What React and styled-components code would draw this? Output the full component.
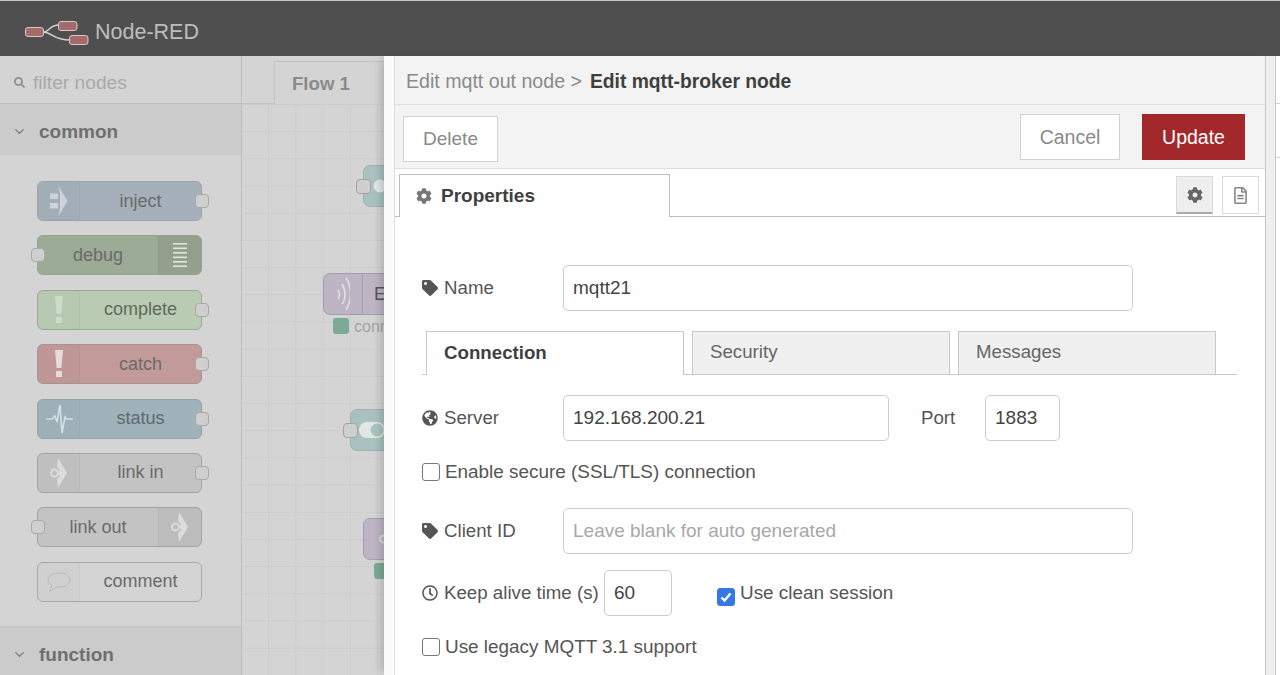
import React from "react";
import styled, { createGlobalStyle } from "styled-components";
import { FaCog, FaTag, FaGlobeAmericas, FaRegClock, FaRegFileAlt, FaSearch } from "react-icons/fa";
import { FiChevronDown } from "react-icons/fi";

const GlobalStyle = createGlobalStyle`
  html, body {
    margin: 0;
    height: 100%;
    overflow: hidden;
    font-family: "Liberation Sans", Arial, sans-serif;
    color: #555;
  }
  * { box-sizing: border-box; }
`;

const Page = styled.div`
  position: relative;
  width: 1280px;
  height: 675px;
  overflow: hidden;
  background: #d4d4d4;
`;

const Header = styled.header`
  height: 56px;
  background: #4f4f4f;
  border-top: 1px solid #c9c9c9;
  display: flex;
  align-items: center;
  padding: 8px 0 0 24px;
  gap: 6px;
  color: #bdbdbd;
  font-size: 21.5px;
`;

const Main = styled.div`
  display: flex;
  height: 619px;
`;

const Palette = styled.aside`
  width: 242px;
  flex: none;
  border-right: 1px solid #bdbdbd;
  background: #d4d4d4;
`;

const Filter = styled.div`
  height: 48px;
  display: flex;
  align-items: center;
  padding: 6px 0 0 14px;
  gap: 8px;
  font-size: 19.2px;
  color: #a9a9a9;
  border-bottom: 1px solid #bcbcbc;
  svg { color: #8f8f8f; }
`;

const Category = styled.div`
  height: 51px;
  display: flex;
  align-items: center;
  padding: 4px 0 0 12px;
  gap: 12px;
  font-size: 19px;
  font-weight: 700;
  color: #6f6f6f;
  background: #cbcbcb;
  svg { color: #777; }
`;

const NodeList = styled.div`
  height: 472px;
  padding: 26px 0 0 37px;
  display: flex;
  flex-direction: column;
  gap: 14.4px;
  border-bottom: 1px solid #c3c3c3;
`;

const PaletteNode = styled.div`
  position: relative;
  width: 165px;
  height: 40px;
  flex: none;
  display: flex;
  flex-direction: ${(p) => (p.$flip ? "row-reverse" : "row")};
  border: 1px solid ${(p) => p.$line};
  border-radius: 6px;
  background: ${(p) => p.$bg};
  font-size: 18px;
  color: ${(p) => p.$text || "#6a6a6a"};
`;

const IconCell = styled.div`
  width: ${(p) => (p.$flip ? "43px" : "42px")};
  flex: none;
  display: flex;
  align-items: center;
  justify-content: center;
  background: rgba(0, 0, 0, ${(p) => p.$shade || 0.015});
  border-radius: ${(p) => (p.$flip ? "0 5px 5px 0" : "5px 0 0 5px")};
  ${(p) => (p.$flip ? "border-left" : "border-right")}: 1px solid rgba(0, 0, 0, 0.03);
`;

const NodeLabel = styled.div`
  flex: 1;
  display: flex;
  align-items: center;
  justify-content: center;
`;

const Port = styled.span`
  position: absolute;
  top: 12px;
  ${(p) => (p.$side === "left" ? "left: -7px" : "right: -8px")};
  width: 14px;
  height: 14px;
  border-radius: 4px;
  background: #cfcfcf;
  border: 1px solid #a8a8a8;
`;

const Workspace = styled.section`
  flex: 1;
  min-width: 0;
`;

const TabBar = styled.div`
  height: 48px;
  padding: 5px 0 0 32px;
  border-bottom: 1px solid #c3c3c3;
`;

const FlowTab = styled.div`
  width: 120px;
  height: 43px;
  border: 1px solid #c2c2c2;
  border-bottom: 0;
  background: #d4d4d4;
  padding: 11px 0 0 17px;
  font-size: 18.6px;
  font-weight: 700;
  color: #8a8a8a;
`;

const Canvas = styled.div`
  position: relative;
  height: 571px;
  overflow: hidden;
  background-color: #d4d4d4;
  background-image:
    linear-gradient(#cccccc 1px, transparent 1px),
    linear-gradient(90deg, #cccccc 1px, transparent 1px);
  background-size: 27.2px 27.2px;
  background-position: -1px 0;
`;

const FlowNode = styled.div`
  position: absolute;
  left: ${(p) => p.$x}px;
  top: ${(p) => p.$y}px;
  width: 100px;
  height: 42px;
  border: 1px solid ${(p) => p.$line};
  border-radius: 7px;
  background: ${(p) => p.$bg};
  display: flex;
  align-items: center;
`;

const FlowIcon = styled.div`
  width: 39px;
  height: 100%;
  flex: none;
  display: flex;
  align-items: center;
  justify-content: ${(p) => (p.$start ? "flex-start" : "center")};
  padding-left: ${(p) => p.$pad || 0}px;
  ${(p) => p.$divided && "border-right: 1px solid #a49dab;"}
`;

const FlowNodeText = styled.span`
  padding-left: 11px;
  font-size: 18px;
  color: #555;
`;

const CanvasPort = styled.span`
  position: absolute;
  left: ${(p) => p.$x}px;
  top: ${(p) => p.$y}px;
  width: 15px;
  height: 15px;
  border-radius: 4px;
  background: #cfcfcf;
  border: 1px solid #a3a3a3;
`;

const StatusDot = styled.span`
  position: absolute;
  left: ${(p) => p.$x}px;
  top: ${(p) => p.$y}px;
  width: 16px;
  height: 16px;
  border-radius: 3px;
  background: #7bab96;
`;

const StatusText = styled.span`
  position: absolute;
  left: ${(p) => p.$x}px;
  top: ${(p) => p.$y}px;
  font-size: 16px;
  color: #a3a3a3;
`;

const Tray = styled.div`
  position: absolute;
  left: 384px;
  top: 56px;
  width: 882px;
  height: 619px;
  background: #fbfbfb;
  padding-left: 10px;
  border-right: 1px solid #c4c4c4;
  box-shadow: -6px 0 8px -3px rgba(0, 0, 0, 0.18);
`;

const TrayInner = styled.div`
  height: 100%;
  border-left: 1px solid #dcdcdc;
  background: #fff;
`;

const Crumbs = styled.div`
  height: 49px;
  background: #f3f3f3;
  border-bottom: 1px solid #dedede;
  display: flex;
  align-items: center;
  padding: 3px 0 0 11px;
  font-size: 19.6px;
  color: #8a8a8a;
  gap: 8px;
  b { color: #3f3f3f; font-size: 19.3px; }
`;

const Toolbar = styled.div`
  height: 64px;
  background: #f3f3f3;
  border-bottom: 1px solid #dedede;
  display: flex;
  align-items: flex-start;
  padding: 9px 20px 0 8px;
`;

const Button = styled.button`
  font: inherit;
  font-size: ${(p) => p.$fs || 19.5}px;
  width: ${(p) => p.$w}px;
  height: 46px;
  margin-top: ${(p) => p.$mt || 0}px;
  margin-left: ${(p) => (p.$push ? "auto" : p.$ml ? p.$ml + "px" : 0)};
  background: ${(p) => (p.$primary ? "#a3282b" : "#fff")};
  color: ${(p) => (p.$primary ? "#fff" : "#8a8a8a")};
  border: 1px solid ${(p) => (p.$primary ? "#a3282b" : "#d2d2d2")};
  padding: 0;
`;

const TabRow = styled.div`
  height: 48px;
  display: flex;
  align-items: flex-end;
  padding: 0 6px 0 4px;
  border-bottom: 1px solid #bdbdbd;
`;

const PropTab = styled.div`
  width: 271px;
  height: 43px;
  margin-bottom: -1px;
  background: #fff;
  border: 1px solid #bdbdbd;
  border-bottom: 0;
  display: flex;
  align-items: center;
  gap: 9px;
  padding: 0 0 0 16px;
  font-size: 19px;
  font-weight: 700;
  color: #3f3f3f;
  svg { color: #777; }
`;

const SideButton = styled.div`
  width: 37px;
  height: 38px;
  align-self: flex-start;
  margin: 7px 0 0 ${(p) => (p.$first ? "auto" : "9px")};
  display: flex;
  align-items: center;
  justify-content: center;
  background: ${(p) => (p.$active ? "#eeeeee" : "#fff")};
  border: 1px solid #dadada;
  border-bottom: ${(p) => (p.$active ? "2px solid #aaa" : "1px solid #dadada")};
  svg { color: ${(p) => (p.$active ? "#666" : "#888")}; }
`;

const Form = styled.div`
  padding: 48px 0 0 27px;
  font-size: 18.7px;
  color: #555;
`;

const Row = styled.div`
  display: flex;
  align-items: center;
  height: 46px;
  margin-top: ${(p) => p.$mt || 0}px;
`;

const Label = styled.label`
  width: ${(p) => p.$w || 141}px;
  margin-left: ${(p) => p.$ml || 0}px;
  flex: none;
  display: flex;
  align-items: center;
  gap: 6px;
  padding-bottom: 1px;
  white-space: nowrap;
  svg { color: #555; flex: none; }
`;

const TextInput = styled.input`
  font: inherit;
  font-size: 19px;
  color: #444;
  width: ${(p) => p.$w}px;
  height: 46px;
  flex: none;
  border: 1px solid #ccc;
  border-radius: 5px;
  padding: 0 9px;
  outline: 0;
  background: #fff;
  &::placeholder { color: #a8a8a8; opacity: 1; }
`;

const SubTabs = styled.div`
  display: flex;
  gap: 8px;
  width: 815px;
  height: 44px;
  margin-top: 20px;
  border-bottom: 1px solid #c8c8c8;
  padding-left: 4px;
`;

const SubTab = styled.div`
  width: 258px;
  height: 44px;
  padding: ${(p) => (p.$active ? "10px 0 0 17px" : "9px 0 0 17px")};
  background: ${(p) => (p.$active ? "#fff" : "#f0f0f0")};
  border: 1px solid #c8c8c8;
  border-bottom: ${(p) => (p.$active ? "0" : "1px solid #c8c8c8")};
  font-weight: ${(p) => (p.$active ? 700 : 400)};
  color: ${(p) => (p.$active ? "#3f3f3f" : "#666")};
`;

const CheckRow = styled.div`
  display: flex;
  align-items: center;
  gap: 5px;
  height: 18px;
  margin-top: ${(p) => p.$mt}px;
`;

const Check = styled.span`
  width: 18px;
  height: 18px;
  flex: none;
  border-radius: 3px;
  display: flex;
  align-items: center;
  justify-content: center;
  border: 1px solid ${(p) => (p.$on ? "#3478e5" : "#777")};
  background: ${(p) => (p.$on ? "#3478e5" : "#fff")};
`;

const CheckText = styled.span`
  font-size: 18.9px;
  white-space: nowrap;
`;

const CleanSession = styled.div`
  display: flex;
  align-items: center;
  gap: 5px;
  margin-left: 45px;
`;

const CleanCheck = styled(Check)`
  position: relative;
  top: 4px;
`;

const SideEdge = styled.div`
  position: absolute;
  left: 1266px;
  top: 56px;
  width: 14px;
  height: 619px;
  padding-left: 9px;
  background: #efefef;
`;

const SideColumn = styled.div`
  height: 100%;
  background: #fff;
  border-left: 1px solid #c9c9c9;
`;

const SideCell = styled.div`
  height: ${(p) => p.$h}px;
  border-bottom: 1px solid #d2d2d2;
`;

const Logo = () => (
  <svg width="65" height="26" viewBox="0 0 65 26" fill="none">
    <path d="M19 12 C26 12 25 5 35 5 M19 12 C28 12 29 20 46 20" stroke="#d3cfcf" strokeWidth="1.6" />
    <rect x="1.500" y="7.500" width="18" height="9" rx="2.500" fill="#a56a6c" stroke="#d9c9c9" />
    <rect x="34.500" y="1.500" width="18.500" height="9" rx="2.500" fill="#a56a6c" stroke="#d9c9c9" />
    <rect x="45.500" y="15.500" width="18.500" height="9" rx="2.500" fill="#a56a6c" stroke="#d9c9c9" />
  </svg>
);

const Inject = () => (
  <svg width="18" height="30" viewBox="0 0 18 30" fill="#cdd3d9">
    <path d="M0 7.500h8v5.500H0zM0 17h8v5.500H0zM8.500 0l9 15-9 15 1.500-8V8z" />
  </svg>
);

const Lines = () => (
  <svg width="14" height="24" viewBox="0 0 14 24" fill="#dfe7db">
    <rect y="0" width="14" height="1.6" />
    <rect y="4.500" width="14" height="1.6" />
    <rect y="9" width="14" height="1.6" />
    <rect y="13.500" width="14" height="1.6" />
    <rect y="18" width="14" height="1.6" />
    <rect y="22.400" width="14" height="1.6" />
  </svg>
);

const Bang = ({ color }) => (
  <svg width="10" height="28" viewBox="0 0 10 28" fill={color}>
    <path d="M1 0h8l-1.600 18H2.600zM2 21h6v6H2z" />
  </svg>
);

const Pulse = () => (
  <svg width="28" height="32" viewBox="0 0 28 32" fill="none" stroke="#d5e0e4" strokeWidth="1.6">
    <path d="M1 16h6l3-3 2 6 3-17 2 28 3-16 2 2h6" />
  </svg>
);

const LinkIcon = () => (
  <svg width="18" height="30" viewBox="0 0 18 30" fill="#dcdcdc">
    <path d="M8 0l9 15-9 15-1-9 3-3-2-3 2-3-3-3z" />
    <circle cx="4.500" cy="15" r="3.500" fill="none" stroke="#dcdcdc" strokeWidth="2" />
  </svg>
);

const Bubble = () => (
  <svg width="24" height="20" viewBox="0 0 24 20" fill="none" stroke="#b9b9b9" strokeWidth="1">
    <path d="M12 1c6 0 11 3 11 7s-5 7-11 7c-1 0-2 0-3-.2C7.500 17 5 18.500 2 19c1.500-1.500 2.500-3 2.500-5.500C2.500 12 1 10 1 8c0-4 5-7 11-7z" />
  </svg>
);

const Wifi = () => (
  <svg width="14" height="36" viewBox="0 0 14 36" fill="none" stroke="#e2dde6" strokeWidth="1.6">
    <path d="M2 14c2 3 2 6 0 9M6 8c4 6 4 15 0 20M10 2c6 9 6 23 0 32" />
  </svg>
);

const Dot = () => (
  <svg width="14" height="14" viewBox="0 0 14 14">
    <circle cx="7" cy="7" r="6.500" fill="#dfe8e6" />
  </svg>
);

const Toggle = () => (
  <svg width="26" height="16" viewBox="0 0 26 16">
    <rect width="26" height="16" rx="8" fill="#dfe8e6" />
    <circle cx="18" cy="8" r="6.500" fill="#a9c4be" />
  </svg>
);

const Tick = () => (
  <svg width="14" height="14" viewBox="0 0 14 14" fill="none" stroke="#fff" strokeWidth="2.400">
    <path d="M2.500 7.500l3 3 6-7" />
  </svg>
);

const nodes = [
  { name: "inject", bg: "#a6b0bb", line: "#9aa3ad", icon: <Inject />, right: true },
  { name: "debug", bg: "#9cab96", line: "#93a18d", icon: <Lines />, flip: true, shade: 0.06 },
  { name: "complete", bg: "#b9ccb3", line: "#9aaa96", icon: <Bang color="#cddcc8" />, right: true, text: "#5e6a5a" },
  { name: "catch", bg: "#c29a99", line: "#a99392", icon: <Bang color="#e6dada" />, right: true },
  { name: "status", bg: "#a0b2ba", line: "#93a3aa", icon: <Pulse />, right: true, text: "#5f6a70" },
  { name: "link in", bg: "#c3c3c3", line: "#a3a3a3", icon: <LinkIcon />, right: true },
  { name: "link out", bg: "#c3c3c3", line: "#a3a3a3", icon: <LinkIcon />, flip: true, shade: 0.03 },
  { name: "comment", bg: "#d4d4d4", line: "#a8a8a8", icon: <Bubble /> },
];

export default function App() {
  return (
    <Page>
      <GlobalStyle />
      <Header>
        <Logo />
        <span>Node-RED</span>
      </Header>
      <Main>
        <Palette>
          <Filter>
            <FaSearch size={11} />
            <span>filter nodes</span>
          </Filter>
          <Category>
            <FiChevronDown size={15} />
            common
          </Category>
          <NodeList>
            {nodes.map((n) => (
              <PaletteNode key={n.name} $bg={n.bg} $line={n.line} $flip={n.flip} $text={n.text}>
                <IconCell $flip={n.flip} $shade={n.shade}>{n.icon}</IconCell>
                <NodeLabel>{n.name}</NodeLabel>
                {n.right && <Port $side="right" />}
                {n.flip && <Port $side="left" />}
              </PaletteNode>
            ))}
          </NodeList>
          <Category>
            <FiChevronDown size={15} />
            function
          </Category>
        </Palette>
        <Workspace>
          <TabBar>
            <FlowTab>Flow 1</FlowTab>
          </TabBar>
          <Canvas>
            <FlowNode $x={121} $y={61} $bg="#a9c2c0" $line="#9db3b1">
              <FlowIcon $start $pad={9}>
                <Dot />
              </FlowIcon>
            </FlowNode>
            <CanvasPort $x={114} $y={75} />
            <FlowNode $x={81} $y={169} $bg="#bdb5c4" $line="#a49dab">
              <FlowIcon $divided>
                <Wifi />
              </FlowIcon>
              <FlowNodeText>E</FlowNodeText>
            </FlowNode>
            <StatusDot $x={91} $y={214} />
            <StatusText $x={112} $y={214}>connected</StatusText>
            <FlowNode $x={108} $y={305} $bg="#a9c2c0" $line="#9db3b1">
              <FlowIcon $start $pad={8}>
                <Toggle />
              </FlowIcon>
            </FlowNode>
            <CanvasPort $x={101} $y={319} />
            <FlowNode $x={121} $y={414} $bg="#bdb5c4" $line="#a49dab">
              <FlowIcon $start $pad={15}>
                <LinkIcon />
              </FlowIcon>
            </FlowNode>
            <StatusDot $x={132} $y={459} />
          </Canvas>
        </Workspace>
      </Main>
      <Tray>
        <TrayInner>
          <Crumbs>
            <span>Edit mqtt out node &gt;</span>
            <b>Edit mqtt-broker node</b>
          </Crumbs>
          <Toolbar>
            <Button $w={95} $mt={2} $fs={19}>Delete</Button>
            <Button $w={100} $push>Cancel</Button>
            <Button $w={103} $ml={22} $primary>Update</Button>
          </Toolbar>
          <TabRow>
            <PropTab>
              <FaCog size={16} />
              Properties
            </PropTab>
            <SideButton $first $active>
              <FaCog size={16} />
            </SideButton>
            <SideButton>
              <FaRegFileAlt size={17} />
            </SideButton>
          </TabRow>
          <Form>
            <Row>
              <Label>
                <FaTag size={16} />
                Name
              </Label>
              <TextInput $w={570} defaultValue="mqtt21" />
            </Row>
            <SubTabs>
              <SubTab $active>Connection</SubTab>
              <SubTab>Security</SubTab>
              <SubTab>Messages</SubTab>
            </SubTabs>
            <Row $mt={20}>
              <Label>
                <FaGlobeAmericas size={16} />
                Server
              </Label>
              <TextInput $w={326} defaultValue="192.168.200.21" />
              <Label $w={64} $ml={32}>Port</Label>
              <TextInput $w={75} defaultValue="1883" />
            </Row>
            <CheckRow $mt={22}>
              <Check />
              <CheckText>Enable secure (SSL/TLS) connection</CheckText>
            </CheckRow>
            <Row $mt={27}>
              <Label>
                <FaTag size={16} />
                Client ID
              </Label>
              <TextInput $w={570} placeholder="Leave blank for auto generated" />
            </Row>
            <Row $mt={16}>
              <Label $w={182}>
                <FaRegClock size={16} />
                Keep alive time (s)
              </Label>
              <TextInput $w={68} defaultValue="60" />
              <CleanSession>
                <CleanCheck $on>
                  <Tick />
                </CleanCheck>
                <CheckText>Use clean session</CheckText>
              </CleanSession>
            </Row>
            <CheckRow $mt={22}>
              <Check />
              <CheckText>Use legacy MQTT 3.1 support</CheckText>
            </CheckRow>
          </Form>
        </TrayInner>
      </Tray>
      <SideEdge>
        <SideColumn>
          <SideCell $h={48} />
          <SideCell $h={54} />
        </SideColumn>
      </SideEdge>
    </Page>
  );
}
